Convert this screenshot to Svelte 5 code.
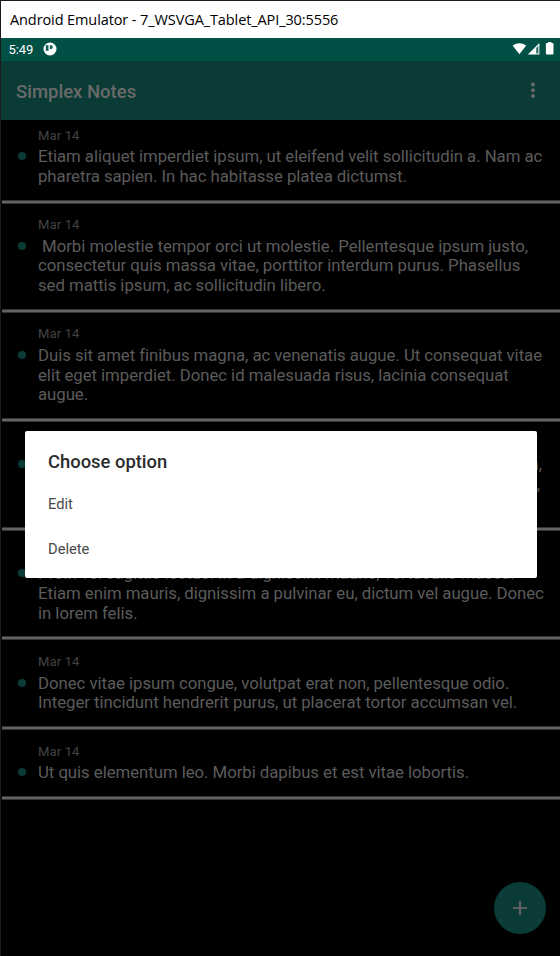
<script>
  const notes = [
    { lines: ['Etiam aliquet imperdiet ipsum, ut eleifend velit sollicitudin a. Nam ac', 'pharetra sapien. In hac habitasse platea dictumst.'] },
    { lines: ['\u00a0Morbi molestie tempor orci ut molestie. Pellentesque ipsum justo,', 'consectetur quis massa vitae, porttitor interdum purus. Phasellus', 'sed mattis ipsum, ac sollicitudin libero.'] },
    { lines: ['Duis sit amet finibus magna, ac venenatis augue. Ut consequat vitae', 'elit eget imperdiet. Donec id malesuada risus, lacinia consequat', 'augue.'] },
    { lines: ['Praesent at tellus sit amet nisl pretium rhoncus. Sed a lectus quam,', 'tincidunt vitae nunc vel, dapibus rutrum mi. Nullam ex nibh, mollis,', 'eget semper.'], widths: [504, 502] },
    { lines: ['Proin vel sagittis lectus. In a dignissim mauris, vel iaculis massa.', 'Etiam enim mauris, dignissim a pulvinar eu, dictum vel augue. Donec', 'in lorem felis.'] },
    { lines: ['Donec vitae ipsum congue, volutpat erat non, pellentesque odio.', 'Integer tincidunt hendrerit purus, ut placerat tortor accumsan vel.'] },
    { lines: ['Ut quis elementum leo. Morbi dapibus et est vitae lobortis.'] }
  ];
</script>

<div class="window">
  <header class="titlebar">Android Emulator - 7_WSVGA_Tablet_API_30:5556</header>
  <div class="status">
    <span class="clock">5:49</span>
    <svg class="app" width="14" height="14" viewBox="0 0 14 14">
      <circle cx="7" cy="7" r="6.500" fill="#fff" />
      <path d="M2.800 3.200h2.700v5.600H2.800z" fill="#0b5e53" />
      <path d="M6.900 3.300h1.600a1.900 1.900 0 0 1 0 3.600H6.900z" fill="#0b5e53" />
    </svg>
    <svg class="sys" width="44" height="14" viewBox="0 0 44 14">
      <path d="M.6 3.600Q7.400-1 14.200 3.600L7.400 12.300z" fill="#fff" />
      <path d="M27.400 1V12.600H15.800z" fill="#fff" />
      <path d="M24.200 5.900 26.400 3.700V11.600H24.200z" fill="#2a6f66" />
      <path d="M36.200 1.100V.1h3.200v1h1.200q.9 0 .9.900v9.600q0 .9-.9.900h-5.800q-.9 0-.9-.9V2q0-.9.900-.9z" fill="#fff" />
    </svg>
  </div>
  <div class="appbar">
    <h1>Simplex Notes</h1>
    <svg width="6" height="18" viewBox="0 0 6 18" fill="#6b6b6b">
      <circle cx="3" cy="3.500" r="1.900" /><circle cx="3" cy="9.200" r="1.900" /><circle cx="3" cy="14.900" r="1.900" />
    </svg>
  </div>
  <main>
    <ul>
      {#each notes as note}
        <li>
          <time>Mar 14</time>
          <div class="body">
            <i class="dot"></i>
            {#each note.lines as line, n}
              <p class:fit={note.widths?.[n]} style:width={note.widths?.[n] ? note.widths[n] + 'px' : null}>{line}</p>
            {/each}
          </div>
        </li>
      {/each}
    </ul>
  </main>
  <button class="fab" aria-label="Add note">
    <svg width="16" height="16" viewBox="0 0 16 16"><path d="M8 1v14M1 8h14" stroke="#706b6c" stroke-width="1.700" /></svg>
  </button>
  <div class="dialog" role="dialog">
    <h2>Choose option</h2>
    <div class="option">Edit</div>
    <div class="option">Delete</div>
  </div>
</div>

<style>
  :global(body) { background: #000; }
  .window { position: relative; box-sizing: border-box; width: 560px; height: 956px; overflow: hidden; display: flex; flex-direction: column; background: #000; border-left: 1px solid #1b1b1b; border-top: 1px solid #1b1b1b; font-family: Roboto, sans-serif; }
  .titlebar { flex: none; height: 37px; padding-left: 9px; background: #fff; color: #000; font: 14.500px/37px "Open Sans", sans-serif; letter-spacing: -.1px; white-space: nowrap; }
  .status { flex: none; display: flex; height: 22.500px; background: #005045; color: #fff; align-items: center; }
  .clock { font-size: 13px; margin-left: 7.500px; width: 34.500px; letter-spacing: -.1px; }
  .app { display: block; }
  .sys { margin-left: auto; margin-right: 4px; }
  .appbar { flex: none; height: 59.500px; background: #0a3b36; display: flex; align-items: center; justify-content: space-between; padding: 0 24px 0 15px; }
  h1 { margin: 3px 0 0; font-size: 18.500px; font-weight: 500; color: #6a6a6a; }
  main { flex: 1; min-height: 0; overflow: hidden; }
  ul { list-style: none; margin: -8.400px 0 0 1px; padding: 0; }
  li { box-sizing: border-box; padding: 15px 0 14.800px 36px; position: relative; }
  li::after { content: ''; display: block; position: absolute; left: 0; right: 0; bottom: -2.400px; height: 2px; background: #636363; border: solid #343434; border-width: 1px 0; box-sizing: content-box; }
  time { display: block; height: 20.500px; line-height: 17px; font-size: 13.100px; letter-spacing: .1px; color: #434343; }
  .body { position: relative; }
  .dot { position: absolute; left: -20px; top: 5px; width: 8px; height: 8px; border-radius: 50%; background: #0a3b36; }
  p { margin: 0; font-size: 16.800px; letter-spacing: -.05px; line-height: 19.650px; height: 19.650px; color: #5b5b5b; white-space: nowrap; }
  .fit { display: flex; justify-content: flex-end; }
  .fab { position: absolute; left: 493px; top: 881px; width: 52px; height: 52px; border: 0; padding: 0; border-radius: 50%; background: #0a3b36; display: flex; align-items: center; justify-content: center; }
  .dialog { position: absolute; left: 24px; top: 430px; width: 512px; height: 147px; box-sizing: border-box; border-radius: 2px; background: #fff; padding: 19px 23px 0; }
  h2 { margin: 0 0 9px; font-size: 18.400px; line-height: 24px; height: 23px; font-weight: 500; color: #2b2b2b; }
  .option { height: 45px; line-height: 45px; font-size: 14.700px; color: #484848; }
</style>
